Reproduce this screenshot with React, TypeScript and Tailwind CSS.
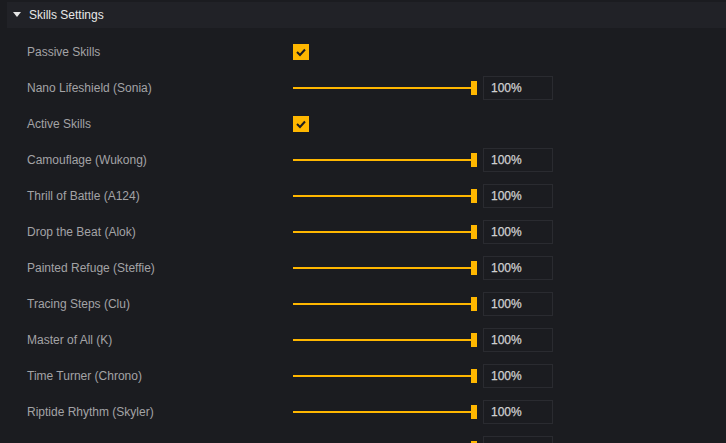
import React from "react";

const rows: { label: string; type: "check" | "slider"; value?: string }[] = [
  { label: "Passive Skills", type: "check" },
  { label: "Nano Lifeshield (Sonia)", type: "slider", value: "100%" },
  { label: "Active Skills", type: "check" },
  { label: "Camouflage (Wukong)", type: "slider", value: "100%" },
  { label: "Thrill of Battle (A124)", type: "slider", value: "100%" },
  { label: "Drop the Beat (Alok)", type: "slider", value: "100%" },
  { label: "Painted Refuge (Steffie)", type: "slider", value: "100%" },
  { label: "Tracing Steps (Clu)", type: "slider", value: "100%" },
  { label: "Master of All (K)", type: "slider", value: "100%" },
  { label: "Time Turner (Chrono)", type: "slider", value: "100%" },
  { label: "Riptide Rhythm (Skyler)", type: "slider", value: "100%" },
  { label: "", type: "slider", value: "" },
];

function Check() {
  return (
    <div className="w-4 h-4 bg-[#ffb700] flex items-center justify-center">
      <svg width="12" height="12" viewBox="0 0 12 12">
        <path d="M2 6 L5 9 L10 3.5" stroke="#1b1c21" strokeWidth="2" fill="none" />
      </svg>
    </div>
  );
}

function Slider({ value }: { value?: string }) {
  return (
    <div className="flex items-center">
      <div className="relative w-[184px] h-[14px] flex items-center">
        <div className="w-[181px] h-[2px] bg-[#ffb700]" />
        <div className="absolute right-0 top-0 w-[6px] h-[14px] bg-[#ffb700]" />
      </div>
      <div className="ml-[6px] w-[70px] h-[24px] border border-[#2a2b30] bg-[#1b1c20] flex items-center pl-[7px] text-[12px] text-[#d0d0d0]" style={{ WebkitTextStroke: "0.25px #d0d0d0" }}>
        {value}
      </div>
    </div>
  );
}

export default function App() {
  return (
    <div
      className="w-[726px] h-[443px] overflow-hidden bg-[#1b1c20] pt-[2px] pl-[7px]"
      style={{ fontFamily: '"Liberation Sans", Arial, sans-serif' }}
    >
      <div className="h-[26px] bg-[#212227] flex items-center pl-[6px] gap-[8px]">
        <svg width="8" height="6" viewBox="0 0 8 6">
          <path d="M0 0 L8 0 L4 5 Z" fill="#e6e6e6" />
        </svg>
        <span className="text-[12px] text-[#e8e8e8]">Skills Settings</span>
      </div>
      <div className="pt-[6px]">
        {rows.map((r, i) => (
          <div key={i} className="h-[36px] flex items-center pl-[20px]">
            <div className="w-[266px] text-[12px] text-[#a3a3a6]">{r.label}</div>
            {r.type === "check" ? <Check /> : <Slider value={r.value} />}
          </div>
        ))}
      </div>
    </div>
  );
}
